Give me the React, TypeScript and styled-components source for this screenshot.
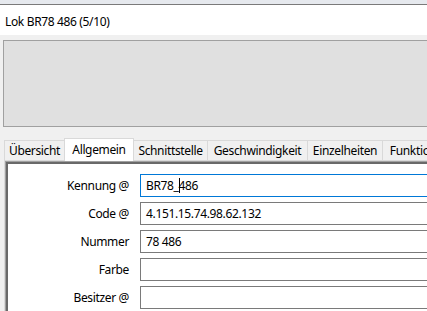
import React from "react";
import styled, { createGlobalStyle } from "styled-components";

const Global = createGlobalStyle`
  html, body { margin: 0; padding: 0; }
  body {
    width: 427px;
    height: 311px;
    overflow: hidden;
    background: #f0f0f0;
    font-family: "Noto Sans", "DejaVu Sans", sans-serif;
    font-size: 12px;
    letter-spacing: -0.35px;
    color: #000;
  }
`;

const Window = styled.div`
  width: 427px;
  height: 311px;
  overflow: hidden;
  display: flex;
  flex-direction: column;
  background: #f0f0f0;
`;

const TopFrame = styled.div`
  height: 4px;
  background: #e6e9ee;
  border-bottom: 1px solid #7a7a7a;
  flex: none;
`;

const TitleBar = styled.div`
  height: 30px;
  background: #ffffff;
  display: flex;
  align-items: center;
  padding-left: 5px;
  padding-top: 2px;
  box-sizing: border-box;
  flex: none;
  white-space: nowrap;
`;

const Body = styled.div`
  flex: 1;
  display: flex;
  flex-direction: column;
  padding: 5px 0 0 3px;
  min-height: 0;
`;

const Preview = styled.div`
  width: 520px;
  height: 87px;
  box-sizing: border-box;
  border: 1px solid #a0a0a0;
  background: #e0e0e0;
  flex: none;
`;

const TabStrip = styled.div`
  display: flex;
  align-items: flex-end;
  height: 22px;
  margin-top: 11px;
  padding-left: 1px;
  flex: none;
  position: relative;
  z-index: 2;
`;

const Tab = styled.div<{ $w: number; $active?: boolean }>`
  width: ${(p) => p.$w}px;
  height: ${(p) => (p.$active ? 23 : 20)}px;
  margin-bottom: ${(p) => (p.$active ? -1 : 0)}px;
  margin-right: -1px;
  box-sizing: border-box;
  border: 1px solid #d9d9d9;
  border-bottom: none;
  background: ${(p) => (p.$active ? "#ffffff" : "#f0f0f0")};
  display: flex;
  align-items: center;
  justify-content: center;
  padding-bottom: ${(p) => (p.$active ? 2 : 0)}px;
  white-space: nowrap;
  overflow: hidden;
  flex: none;
  position: relative;
  z-index: ${(p) => (p.$active ? 2 : 1)};
`;

const TabPage = styled.div`
  margin-left: 1px;
  flex: 1;
  border-top: 1px solid #d9d9d9;
  border-left: 1px solid #d9d9d9;
  background: #f0f0f0;
  display: flex;
  min-height: 0;
`;

const Sunken = styled.div`
  flex: 1;
  border-top: 1px solid #a0a0a0;
  border-left: 1px solid #a0a0a0;
  box-shadow: inset 2px 2px 0 #696969;
  background: #ffffff;
  padding: 12px 0 0 2px;
  display: grid;
  grid-template-columns: 121px 320px;
  grid-auto-rows: 23px;
  column-gap: 11px;
  row-gap: 5px;
  align-content: start;
`;

const Label = styled.div`
  display: flex;
  align-items: center;
  justify-content: flex-end;
  white-space: nowrap;
`;

const Field = styled.div<{ $focused?: boolean }>`
  box-sizing: border-box;
  height: 23px;
  border: 1px solid ${(p) => (p.$focused ? "#0078d7" : "#7a7a7a")};
  background: #ffffff;
  display: flex;
  align-items: center;
  padding-left: 5px;
  white-space: nowrap;
`;

const Caret = styled.span`
  display: inline-block;
  width: 1px;
  height: 15px;
  background: #000;
  margin-right: -1px;
  vertical-align: middle;
`;

const tabs = [
  { label: "Übersicht", w: 61 },
  { label: "Allgemein", w: 70, active: true },
  { label: "Schnittstelle", w: 75 },
  { label: "Geschwindigkeit", w: 101 },
  { label: "Einzelheiten", w: 76 },
  { label: "Funktionen", w: 76 },
];

const fields = [
  { label: "Kennung @", value: "", focused: true },
  { label: "Code @", value: "4.151.15.74.98.62.132" },
  { label: "Nummer", value: "78 486" },
  { label: "Farbe", value: "" },
  { label: "Besitzer @", value: "" },
];

export default function App() {
  return (
    <>
      <Global />
      <Window>
        <TopFrame />
        <TitleBar>Lok BR78 486 (5/10)</TitleBar>
        <Body>
          <Preview />
          <TabStrip>
            {tabs.map((t) => (
              <Tab key={t.label} $w={t.w} $active={t.active}>
                {t.label}
              </Tab>
            ))}
          </TabStrip>
          <TabPage>
            <Sunken>
              {fields.map((f) => (
                <React.Fragment key={f.label}>
                  <Label>{f.label}</Label>
                  <Field $focused={f.focused}>
                    {f.focused ? (
                      <>
                        BR78_
                        <Caret />
                        486
                      </>
                    ) : (
                      f.value
                    )}
                  </Field>
                </React.Fragment>
              ))}
            </Sunken>
          </TabPage>
        </Body>
      </Window>
    </>
  );
}
